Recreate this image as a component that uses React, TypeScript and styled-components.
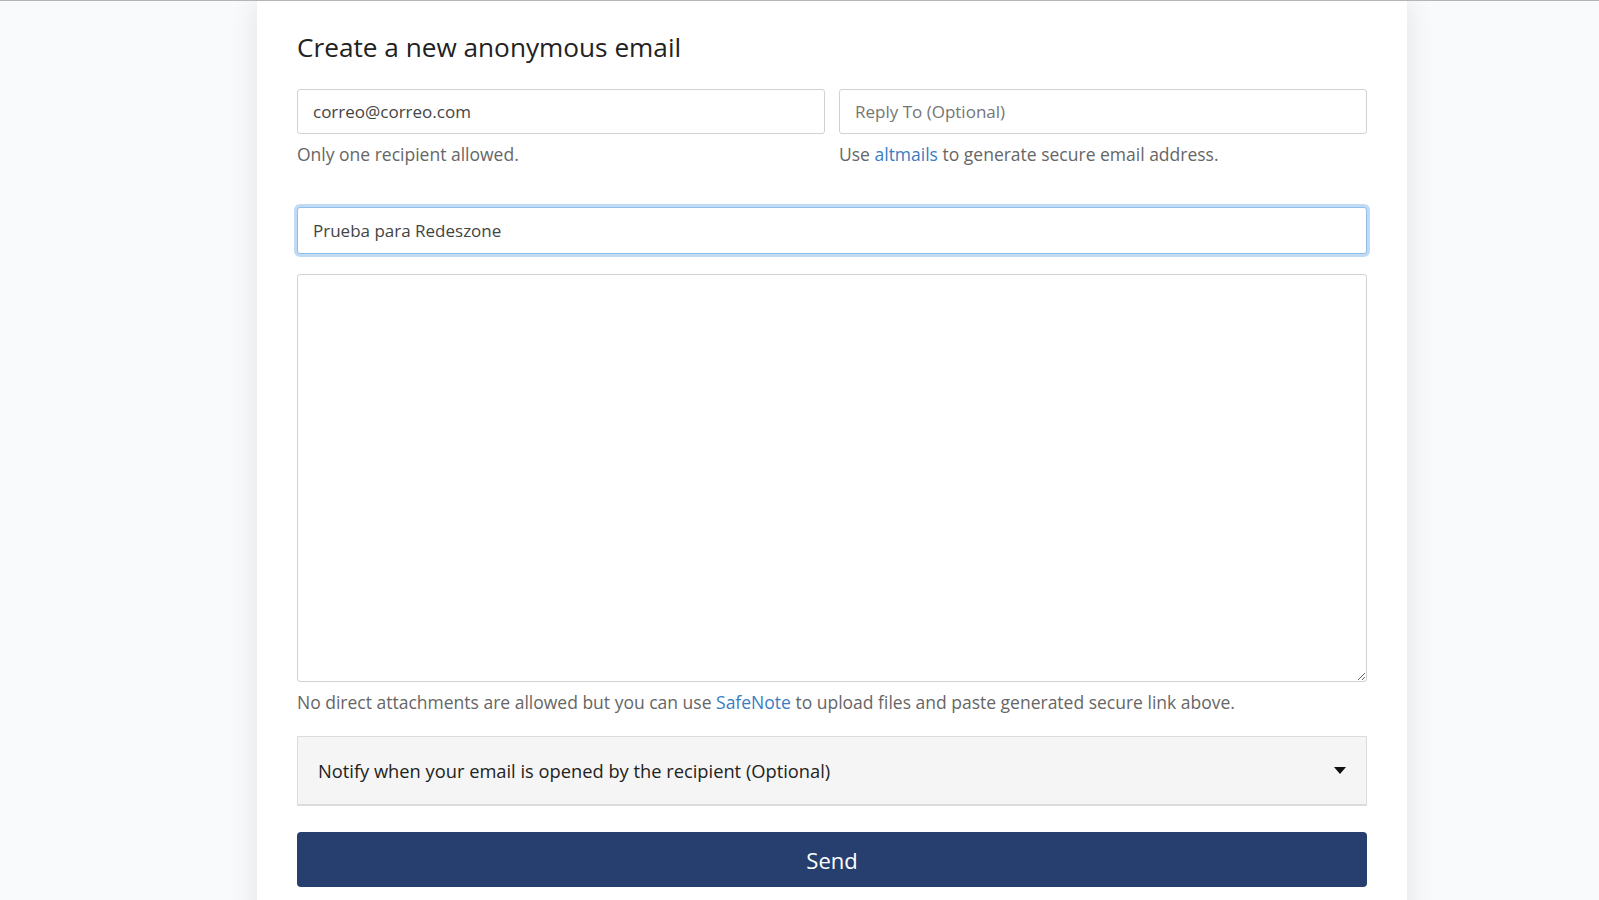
import * as React from 'react';
import styled, { createGlobalStyle } from 'styled-components';

const GlobalStyle = createGlobalStyle`
  html, body {
    margin: 0;
    padding: 0;
    background: #f9fafb;
    font-family: 'Open Sans', 'Noto Sans', sans-serif;
  }
  * {
    box-sizing: border-box;
  }
`;

const Page = styled.div`
  min-height: 900px;
  border-top: 1px solid #b5b5b5;
  padding-left: 257px;
  overflow: hidden;
`;

const Card = styled.div`
  width: 1150px;
  min-height: 910px;
  background: #ffffff;
  box-shadow: 0 0 28px rgba(0, 0, 0, 0.1);
  padding: 28px 40px 40px;
`;

const Title = styled.h1`
  margin: 0 0 24px;
  font-size: 26.2px;
  font-weight: 400;
  line-height: 36px;
  color: #222;
`;

const Row = styled.div`
  display: grid;
  grid-template-columns: 1fr 1fr;
  column-gap: 14px;
`;

const Field = styled.div`
  display: flex;
  flex-direction: column;
`;

const Input = styled.input<{ focused?: boolean }>`
  width: 100%;
  height: ${(p) => (p.focused ? '47px' : '45px')};
  padding: 0 15px;
  font-family: inherit;
  font-size: 17px;
  color: #444;
  background: #fff;
  border: 1px solid ${(p) => (p.focused ? '#8fc0ea' : '#d2d2d2')};
  border-radius: 3px;
  outline: none;
  box-shadow: ${(p) => (p.focused ? '0 0 0 3px rgba(120, 175, 230, 0.45)' : 'none')};

  ::placeholder {
    color: #666;
  }
`;

const Help = styled.p`
  margin: 8px 0 0;
  font-size: 17.5px;
  line-height: 24px;
  color: #666;
`;

const Link = styled.a`
  color: #3a7dc2;
  text-decoration: none;
`;

const SubjectWrap = styled.div`
  margin-top: 41px;
`;

const Body = styled.textarea`
  display: block;
  width: 100%;
  height: 408px;
  margin-top: 20px;
  padding: 12px 15px;
  font-family: inherit;
  font-size: 17px;
  color: #444;
  border: 1px solid #d2d2d2;
  border-radius: 3px;
  outline: none;
`;

const Notify = styled.div`
  display: flex;
  align-items: center;
  justify-content: space-between;
  height: 70px;
  margin-top: 22px;
  padding: 0 20px 0 20px;
  background: #f5f5f5;
  border: 1px solid #dcdcdc;
  border-bottom-width: 2px;
  font-size: 18.3px;
  color: #222;
`;

const Caret = styled.span`
  width: 0;
  height: 0;
  border-left: 6px solid transparent;
  border-right: 6px solid transparent;
  border-top: 7px solid #111;
`;

const SendButton = styled.button`
  display: block;
  width: 100%;
  height: 55px;
  margin-top: 26px;
  border: none;
  border-radius: 4px;
  background: #263f6e;
  color: #fff;
  font-family: inherit;
  font-size: 22px;
  font-weight: 500;
  cursor: pointer;
`;

export default function App() {
  return (
    <>
      <GlobalStyle />
      <Page>
        <Card>
          <Title>Create a new anonymous email</Title>
          <Row>
            <Field>
              <Input defaultValue="correo@correo.com" />
              <Help>Only one recipient allowed.</Help>
            </Field>
            <Field>
              <Input placeholder="Reply To (Optional)" />
              <Help>
                Use <Link href="#">altmails</Link> to generate secure email address.
              </Help>
            </Field>
          </Row>
          <SubjectWrap>
            <Input focused defaultValue="Prueba para Redeszone" />
          </SubjectWrap>
          <Body />
          <Help>
            No direct attachments are allowed but you can use <Link href="#">SafeNote</Link> to
            upload files and paste generated secure link above.
          </Help>
          <Notify>
            <span>Notify when your email is opened by the recipient (Optional)</span>
            <Caret />
          </Notify>
          <SendButton>Send</SendButton>
        </Card>
      </Page>
    </>
  );
}
